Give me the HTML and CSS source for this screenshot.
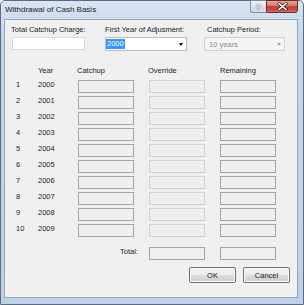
FILE: index.html
```html
<!DOCTYPE html>
<html>
<head>
<meta charset="utf-8">
<link rel="stylesheet" href="styles.css">
</head>
<body>
<div class="window">
  <div class="titlebar">
    <span class="title">Withdrawal of Cash Basis</span>
    <div class="caption">
      <div class="cap-btn help"><span>?</span></div>
      <div class="cap-btn close">
        <svg width="11" height="9" viewBox="0 0 11 9">
          <path d="M2 1.5 L9 7.5 M9 1.5 L2 7.5" stroke="#3b1a1a" stroke-width="3" stroke-linecap="square"/>
          <path d="M2 1.5 L9 7.5 M9 1.5 L2 7.5" stroke="#ffffff" stroke-width="1.6" stroke-linecap="square"/>
        </svg>
      </div>
    </div>
  </div>
  <div class="client">
    <div class="fields">
      <div class="field f-total">
        <label class="lbl">Total Catchup Charge:</label>
        <div class="textbox"></div>
      </div>
      <div class="field f-year">
        <label class="lbl lbl-year">First Year of Adjusment:</label>
        <div class="combo">
          <span class="sel">2000</span>
          <span class="arrow"></span>
        </div>
      </div>
      <div class="field f-period">
        <label class="lbl lbl-period">Catchup Period:</label>
        <div class="combo disabled">
          <span class="dis-text">10 years</span>
          <span class="arrow"></span>
        </div>
      </div>
    </div>

    <div class="grid">
      <div class="hd"></div>
      <div class="hd">Year</div>
      <div class="hd hd-catch">Catchup</div>
      <div class="hd hd-over">Override</div>
      <div class="hd">Remaining</div>

      <div class="num">1</div><div class="yr">2000</div><div class="box"></div><div class="box light"></div><div class="box"></div>
      <div class="num">2</div><div class="yr">2001</div><div class="box"></div><div class="box light"></div><div class="box"></div>
      <div class="num">3</div><div class="yr">2002</div><div class="box"></div><div class="box light"></div><div class="box"></div>
      <div class="num">4</div><div class="yr">2003</div><div class="box"></div><div class="box light"></div><div class="box"></div>
      <div class="num">5</div><div class="yr">2004</div><div class="box"></div><div class="box light"></div><div class="box"></div>
      <div class="num">6</div><div class="yr">2005</div><div class="box"></div><div class="box light"></div><div class="box"></div>
      <div class="num">7</div><div class="yr">2006</div><div class="box"></div><div class="box light"></div><div class="box"></div>
      <div class="num">8</div><div class="yr">2007</div><div class="box"></div><div class="box light"></div><div class="box"></div>
      <div class="num">9</div><div class="yr">2008</div><div class="box"></div><div class="box light"></div><div class="box"></div>
      <div class="num">10</div><div class="yr">2009</div><div class="box"></div><div class="box light"></div><div class="box"></div>

      <div class="total-lbl">Total:</div><div class="box total"></div><div class="box total"></div>
    </div>

    <div class="buttons">
      <button class="btn">OK</button>
      <button class="btn">Cancel</button>
    </div>
  </div>
</div>
</body>
</html>
```

FILE: styles.css
```css
* { box-sizing: border-box; }
html, body { margin: 0; padding: 0; }
body {
  width: 304px;
  height: 305px;
  overflow: hidden;
  background: #ffffff;
  font-family: "Liberation Sans", Arial, sans-serif;
  font-size: 7.5px;
  line-height: 9px;
  color: #1b1b1b;
}
.window {
  width: 304px;
  height: 305px;
  display: flex;
  flex-direction: column;
  padding: 0 5px 6px 3px;
  border: 1px solid #5d6d80;
  border-radius: 5px 5px 0 0;
  background: linear-gradient(to bottom, #d9e5f2 0px, #cddcee 18px, #c3d6ec 40px, #bdd2ea 100%);
}
.titlebar {
  height: 18px;
  display: flex;
  justify-content: space-between;
  align-items: flex-start;
}
.title {
  margin-top: 4px;
  padding-left: 1px;
  font-size: 8px;
  line-height: 10px;
  color: #1a1a1a;
}
.caption {
  display: flex;
  margin-top: -1px;
}
.cap-btn {
  height: 13px;
  display: flex;
  align-items: center;
  justify-content: center;
}
.help {
  width: 16px;
  border: 1px solid #7d8ea3;
  border-right: none;
  border-radius: 0 0 0 3px;
  background: linear-gradient(to bottom, #eef2f7 0%, #dde5ee 50%, #cdd8e5 51%, #d8e2ee 100%);
}
.help span {
  font-size: 9px;
  line-height: 10px;
  font-weight: bold;
  color: #f4f6f9;
  text-shadow: 0 0 1px #55606e, 0 0 1px #55606e;
}
.close {
  width: 32px;
  border: 1px solid #6e2a24;
  border-radius: 0 0 3px 0;
  background: linear-gradient(to bottom, #e3a69d 0%, #d77b6e 45%, #c4443a 50%, #c9483d 80%, #d9735f 100%);
}
.client {
  flex: 1;
  border: 1px solid #98a6b6;
  background: #f0f0f0;
  padding: 5px 0 0 0;
  display: flex;
  flex-direction: column;
}
.fields {
  display: flex;
  padding-left: 7px;
}
.field {
  display: flex;
  flex-direction: column;
  gap: 3px;
}
.f-total { width: 73px; }
.f-year { width: 82px; margin-left: 20px; }
.f-period { width: 81px; margin-left: 17px; }
.lbl {
  display: block;
  white-space: nowrap;
  margin-left: -1px;
}
.lbl-year { margin-left: 0; }
.lbl-period { margin-left: 3px; }
.textbox {
  height: 13px;
  background: #ffffff;
  border: 1px solid #d6dbe1;
}
.combo {
  height: 14px;
  background: #ffffff;
  border: 1px solid #b9bcc2;
  display: flex;
  align-items: center;
  justify-content: space-between;
  padding: 0 3px 0 0;
}
.sel {
  padding: 0 1px;
  height: 10px;
  line-height: 10px;
  background: #3399ff;
  color: #ffffff;
}
.arrow {
  width: 0;
  height: 0;
  border-left: 2.5px solid transparent;
  border-right: 2.5px solid transparent;
  border-top: 3px solid #111;
}
.combo.disabled {
  background: #f4f4f4;
  border-color: #cfd1d4;
}
.dis-text {
  padding-left: 4px;
  color: #8e8e8e;
}
.combo.disabled .arrow { border-top-color: #a3a3a3; }

.grid {
  margin-top: 15px;
  padding-left: 11px;
  display: grid;
  grid-template-columns: 7px 25px 56px 56px 56px;
  column-gap: 15px;
  row-gap: 3px;
  align-items: start;
}
.hd {
  white-space: nowrap;
  margin-bottom: 2px;
}
.hd-catch { margin-left: -1px; }
.hd-over { margin-left: -1px; }
.num, .yr { white-space: nowrap; }
.box {
  height: 13px;
  background: #f0f0f0;
  border: 1px solid #a3a3a3;
}
.box.light { border-color: #d3d3d3; }
.total-lbl {
  grid-column: 1 / 4;
  justify-self: end;
  margin-right: -4px;
  margin-top: 7px;
}
.box.total { margin-top: 7px; }
.buttons {
  display: flex;
  justify-content: flex-end;
  gap: 7px;
  padding-right: 7px;
  margin-top: 7px;
}
.btn {
  width: 47px;
  height: 16px;
  padding: 0;
  font-family: "Liberation Sans", Arial, sans-serif;
  font-size: 7.5px;
  line-height: 9px;
  color: #1b1b1b;
  border: 1px solid #707070;
  border-radius: 2px;
  background: linear-gradient(to bottom, #f3f3f3 0%, #ebebeb 50%, #dddddd 51%, #cfcfcf 100%);
  box-shadow: inset 0 0 0 1px #fafafa;
}
```
